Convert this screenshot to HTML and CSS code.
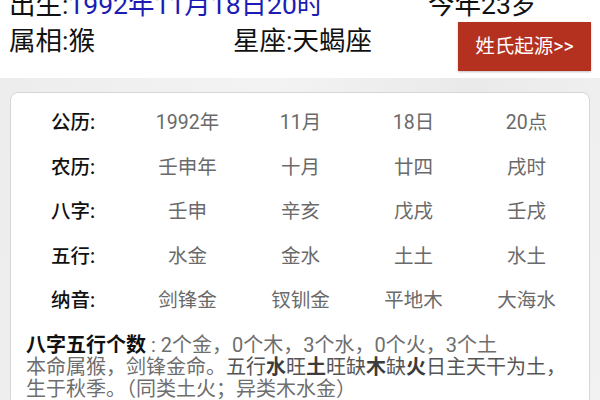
FILE: index.html
```html
<!DOCTYPE html>
<html lang="zh">
<head>
<meta charset="utf-8">
<link rel="stylesheet" href="styles.css">
</head>
<body>
<div class="header">
  <div class="hrow hrow1">
    <div class="birth">出生:<span class="blue">1992年11月18日20时</span></div>
    <div class="age">今年23岁</div>
  </div>
  <div class="hrow hrow2">
    <div class="zodiac">属相:猴</div>
    <div class="star">星座:天蝎座</div>
    <a class="btn">姓氏起源&gt;&gt;</a>
  </div>
</div>
<div class="main">
  <div class="card">
    <div class="table">
      <div class="lbl">公历:</div><div class="val">1992年</div><div class="val">11月</div><div class="val">18日</div><div class="val">20点</div>
      <div class="lbl">农历:</div><div class="val">壬申年</div><div class="val">十月</div><div class="val">廿四</div><div class="val">戌时</div>
      <div class="lbl">八字:</div><div class="val">壬申</div><div class="val">辛亥</div><div class="val">戊戌</div><div class="val">壬戌</div>
      <div class="lbl">五行:</div><div class="val">水金</div><div class="val">金水</div><div class="val">土土</div><div class="val">水土</div>
      <div class="lbl">纳音:</div><div class="val">剑锋金</div><div class="val">钗钏金</div><div class="val">平地木</div><div class="val">大海水</div>
    </div>
    <p class="desc"><b class="head">八字五行个数</b> : 2个金，0个木，3个水，0个火，3个土<br>本命属猴，剑锋金命。<span class="dark">五行<b>水</b>旺<b>土</b>旺缺<b>木</b>缺<b>火</b>日主天干为土，</span><br>生于秋季。（同类土火；异类木水金）</p>
  </div>
</div>
</body>
</html>
```
FILE: styles.css
```css
html, body {
  margin: 0;
  padding: 0;
  background: #ffffff;
  font-family: Roboto, "Noto Sans CJK SC", sans-serif;
  overflow: hidden;
}
.header {
  display: flow-root;
  height: 78px;
  background: #ffffff;
  padding-left: 9px;
}
.hrow {
  display: flex;
  align-items: flex-start;
  font-size: 26.5px;
  line-height: 36px;
  color: #111;
}
.hrow1 {
  margin-top: -13px;
}
.birth { width: 419px; white-space: nowrap; }
.blue { color: #1c1cb4; }
.age { white-space: nowrap; }
.zodiac { width: 224px; }
.star { width: 225px; }
.btn {
  display: flex;
  align-items: center;
  justify-content: center;
  width: 133px;
  height: 49px;
  margin-top: -1px;
  background: #b5311f;
  color: #fff;
  font-size: 19.5px;
  line-height: 1;
  box-shadow: 0 1px 2px rgba(0,0,0,0.25);
}
.main {
  background: #ededed;
  padding: 14px 10px 0 10px;
  height: 400px;
  background-image: linear-gradient(100deg, rgba(255,255,255,0.0) 0%, rgba(255,255,255,0.35) 40%, rgba(220,220,220,0.2) 70%, rgba(255,255,255,0.3) 100%);
}
.card {
  background: #fff;
  border: 1px solid #d6d6d6;
  border-radius: 8px;
  height: 400px;
}
.table {
  display: grid;
  grid-template-columns: 120px repeat(4, 113px);
  grid-auto-rows: 44.5px;
  padding-top: 5.5px;
  font-size: 19.5px;
  align-items: center;
}
.lbl {
  padding-left: 40px;
  color: #111;
  font-weight: 500;
  white-space: nowrap;
}
.val {
  text-align: center;
  color: #6a6a6a;
  white-space: nowrap;
}
.desc {
  margin: 13px 0 0 0;
  padding-left: 15px;
  font-size: 20px;
  line-height: 22px;
  color: #6e6e6e;
  white-space: nowrap;
}
.head {
  color: #111;
  font-weight: 700;
}
.dark {
  color: #555;
}
.dark b {
  color: #3c3c3c;
  font-weight: 700;
}
```
